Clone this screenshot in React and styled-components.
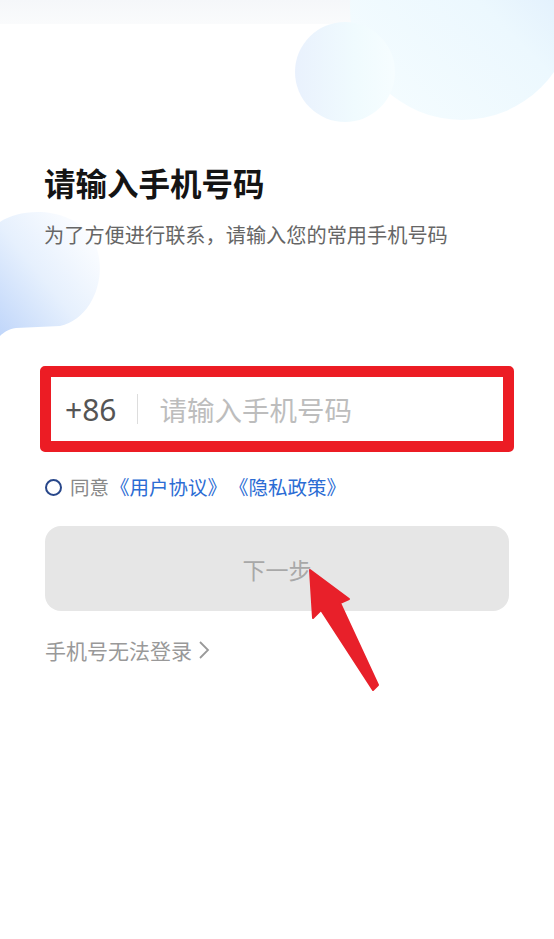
import React from 'react';
import styled, { createGlobalStyle } from 'styled-components';

const Global = createGlobalStyle`
  html, body {
    margin: 0;
    padding: 0;
    background: #ffffff;
  }
  body {
    font-family: "Noto Sans CJK SC", "Noto Sans", sans-serif;
  }
`;

const Page = styled.div`
  position: relative;
  width: 554px;
  min-height: 939px;
  background: #ffffff;
  overflow: hidden;
`;

const Backdrop = styled.svg`
  position: absolute;
  top: 0;
  left: 0;
  z-index: 0;
`;

const Content = styled.div`
  position: relative;
  z-index: 1;
  display: flex;
  flex-direction: column;
  padding: 160px 40px 0 44px;
`;

const Title = styled.h1`
  margin: 0;
  font-size: 31.5px;
  line-height: 44px;
  font-weight: 700;
  color: #141414;
`;

const Subtitle = styled.p`
  margin: 17px 0 0 0;
  font-size: 20.2px;
  line-height: 28px;
  color: #666666;
`;

const PhoneBox = styled.div`
  display: flex;
  align-items: center;
  margin: 117px 0 0 -4px;
  height: 64px;
  border: 11px solid #ec1c24;
  border-radius: 5px;
  background: #ffffff;
  padding-left: 14px;
`;

const Code = styled.span`
  font-family: "Noto Sans", "Noto Sans CJK SC", sans-serif;
  font-size: 30px;
  color: #555555;
`;

const Divider = styled.span`
  width: 1px;
  height: 30px;
  margin: 0 21px 0 21px;
  background: #dddddd;
`;

const Placeholder = styled.span`
  font-size: 27.5px;
  color: #bdbdbd;
`;

const AgreeRow = styled.div`
  display: flex;
  align-items: center;
  margin-top: 21px;
  height: 28px;
  font-size: 19.5px;
  line-height: 28px;
`;

const Radio = styled.span`
  box-sizing: border-box;
  width: 17px;
  height: 17px;
  border: 2.5px solid #28478a;
  border-radius: 50%;
  margin: 0 8px 0 1px;
`;

const Muted = styled.span`
  color: #888888;
`;

const Link = styled.span`
  display: inline-flex;
  color: #2b6cd4;
`;

const Bracket = styled.span`
  display: inline-block;
  width: 1.05em;
  text-align: ${p => (p.$open ? 'right' : 'left')};
`;

const NextButton = styled.div`
  display: flex;
  align-items: center;
  justify-content: center;
  margin: 25px 5px 0 1px;
  height: 85px;
  border-radius: 16px;
  background: #e6e6e6;
  font-size: 23px;
  color: #a8a8a8;
`;

const HelpLink = styled.div`
  display: flex;
  align-items: center;
  gap: 6px;
  margin: 25px 0 0 1px;
  height: 28px;
  font-size: 21px;
  line-height: 28px;
  color: #999999;
`;

const Arrow = styled.svg`
  position: absolute;
  top: 560px;
  left: 300px;
  z-index: 2;
`;

function Decorations() {
  return (
    <Backdrop width="554" height="360" viewBox="0 0 554 360">
      <defs>
        <linearGradient id="band" x1="0" y1="0" x2="0" y2="1">
          <stop offset="0" stopColor="#f5f7fa" />
          <stop offset="1" stopColor="#fafbfc" />
        </linearGradient>
        <linearGradient id="blob" x1="1" y1="0" x2="0" y2="1">
          <stop offset="0" stopColor="#d6e7fb" />
          <stop offset="0.45" stopColor="#ecf8fe" />
          <stop offset="1" stopColor="#f6fdff" />
        </linearGradient>
        <linearGradient id="dot" x1="0" y1="0" x2="1" y2="0">
          <stop offset="0" stopColor="#e9f1fd" />
          <stop offset="0.6" stopColor="#f0fbfe" />
          <stop offset="1" stopColor="#f6fdff" />
        </linearGradient>
        <linearGradient id="side" x1="0" y1="1" x2="1" y2="0">
          <stop offset="0" stopColor="#c0d6fa" />
          <stop offset="0.45" stopColor="#e6f0fd" />
          <stop offset="0.8" stopColor="#f8fbff" />
          <stop offset="1" stopColor="#ffffff" />
        </linearGradient>
      </defs>
      <rect x="0" y="0" width="554" height="24" fill="url(#band)" />
      <ellipse cx="462" cy="8" rx="112" ry="112" fill="url(#blob)" />
      <circle cx="345" cy="72" r="50" fill="url(#dot)" />
      <path
        d="M0 222 C 20 208, 70 205, 92 238 C 110 268, 96 318, 60 326 L 16 328 C 8 329, 3 333, 0 336 Z"
        fill="url(#side)"
      />
    </Backdrop>
  );
}

function DocLink({ name }) {
  return (
    <Link>
      <Bracket $open>《</Bracket>
      {name}
      <Bracket>》</Bracket>
    </Link>
  );
}

export default function App() {
  return (
    <Page>
      <Global />
      <Decorations />
      <Content>
        <Title>请输入手机号码</Title>
        <Subtitle>为了方便进行联系，请输入您的常用手机号码</Subtitle>
        <PhoneBox>
          <Code>+86</Code>
          <Divider />
          <Placeholder>请输入手机号码</Placeholder>
        </PhoneBox>
        <AgreeRow>
          <Radio />
          <Muted>同意</Muted>
          <DocLink name="用户协议" />
          <DocLink name="隐私政策" />
        </AgreeRow>
        <NextButton>下一步</NextButton>
        <HelpLink>
          手机号无法登录
          <svg width="12" height="20" viewBox="0 0 12 20">
            <polyline points="2,2 10,10 2,18" fill="none" stroke="#999999" strokeWidth="1.8" />
          </svg>
        </HelpLink>
      </Content>
      <Arrow width="90" height="140" viewBox="300 560 90 140">
        <polygon
          points="310,570 349,599 340,603 378,685 373,690 321,610 313,618"
          fill="#e8202a"
          stroke="#e8202a"
          strokeWidth="2"
          strokeLinejoin="round"
        />
      </Arrow>
    </Page>
  );
}
